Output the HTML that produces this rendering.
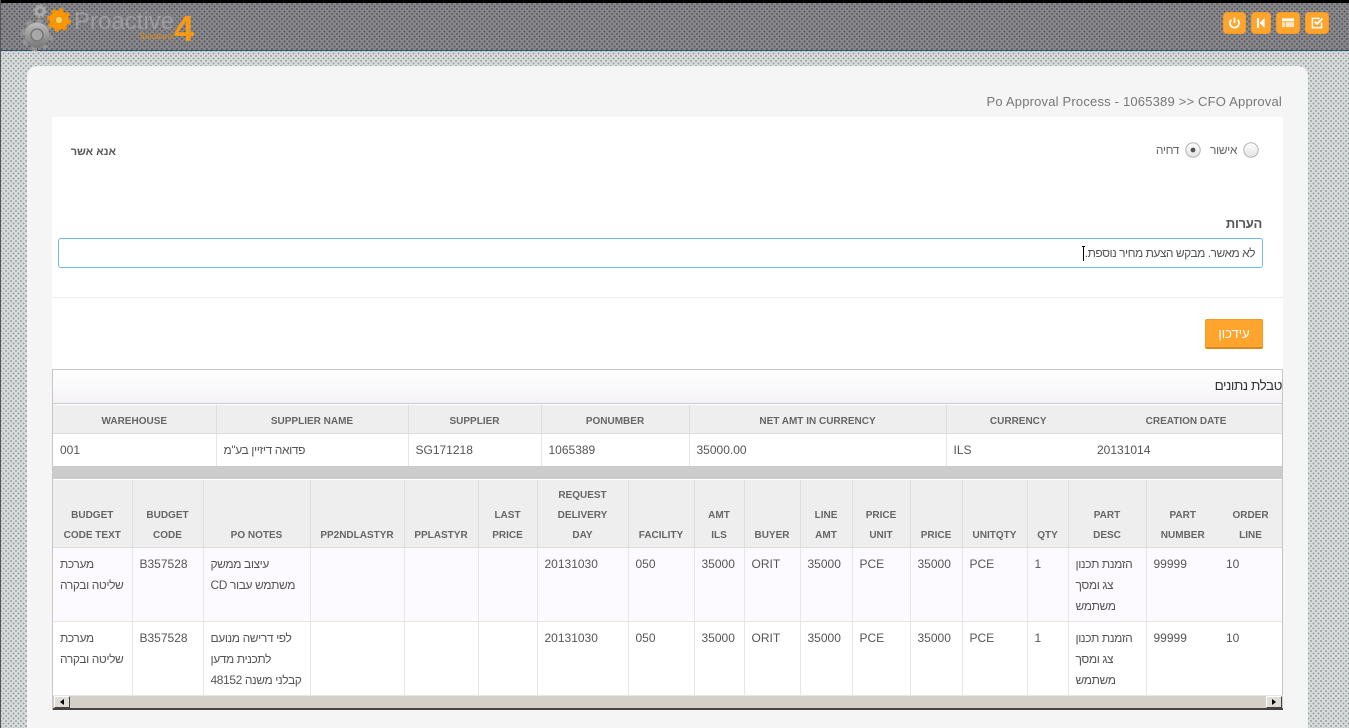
<!DOCTYPE html>
<html lang="he"><head><meta charset="utf-8"><title>Po Approval Process</title>
<style>
*{box-sizing:border-box}
html,body{margin:0;padding:0;width:1349px;height:728px;overflow:hidden}
body{position:relative;font-family:"Liberation Sans",Arial,sans-serif;color:#555;font-size:12px;
background-color:#d8dbdb;
background-image:radial-gradient(circle at 1px 1px,#9aa0a0 .8px,transparent 1px),radial-gradient(circle at 3.5px 3.5px,#9aa0a0 .8px,transparent 1px);background-size:5px 5px}
.abs{position:absolute}
#edge{left:0;top:0;width:1px;height:728px;background:#555}
#header{left:0;top:0;width:1349px;height:51px;border-top:3px solid #000;border-bottom:1px solid #2f5176;border-left:1px solid #444;
background-color:#88888c;
background-image:radial-gradient(circle at 1px 1px,#5a5a5e .8px,transparent 1px),radial-gradient(circle at 3.5px 3.5px,#5a5a5e .8px,transparent 1px);background-size:5px 5px}
.btn{top:12px;height:22px;background:#ffa42c;border:1px solid #f39a22;border-radius:4px}
.btn svg{position:absolute;left:0;top:0;width:100%;height:100%}
#card{left:27px;top:66px;width:1281px;height:680px;background:#f6f5f6;border-radius:10px}
#white{left:52px;top:117px;width:1231px;height:252px;background:#fff}
.t{white-space:nowrap}
#inp{left:58px;top:238px;width:1205px;height:30px;border:1px solid #6db9f2;border-radius:3px;background:#fff}
#panel{left:52px;top:369px;width:1231px;height:341px;border:1px solid #c9c4c8;border-bottom:none;background:#fff}
#ptitle{left:53px;top:370px;width:1229px;height:34px;background:linear-gradient(#fff,#f4f2f6);border-bottom:1px solid #ccc}
table{border-collapse:collapse;table-layout:fixed;position:absolute;left:53px;background:#fff}
th{background:#eee;color:#666;font-size:10px;font-weight:bold;line-height:20px;text-align:center;vertical-align:bottom;padding:0 0 1px;border-left:1px solid #ddd;border-bottom:1px solid #ddd}
td{color:#555;font-size:12px;line-height:21px;vertical-align:top;padding:6px 7px 0;border-left:1px solid #e6e6e6;border-bottom:1px solid #e6e6e6;overflow:hidden;white-space:nowrap}
.n{border-left:none}
.f{border-left:none}
tr.a td{background:#fdfaff}
.he{letter-spacing:-.4px}
#gray{left:53px;top:466px;width:1229px;height:13px;background:#ccc}
#sb{left:53px;top:695px;width:1230px;height:15px;background:#d4d0c8;border-top:1px solid #e8e6e0;border-bottom:2px solid #444}
.sbb{top:696px;width:16px;height:12px;background:#e0ddd6;border:1px solid #fff;border-right-color:#444;border-bottom-color:#444}
.tri{width:0;height:0;border-top:3.5px solid transparent;border-bottom:3.5px solid transparent;top:2px;left:5px}
</style></head><body>
<div id="header" class="abs"></div>
<div id="edge" class="abs"></div>

<svg class="abs" style="left:18px;top:3px" width="60" height="48" viewBox="0 0 60 48">
<defs><linearGradient id="g" x1="0" y1="0" x2="0" y2="1"><stop offset="0" stop-color="#bdbdbd"/><stop offset="1" stop-color="#777"/></linearGradient></defs>
<circle cx="19" cy="32" r="12.5" fill="url(#g)"/>
<circle cx="19" cy="32" r="14.5" fill="none" stroke="#949494" stroke-width="3.5" stroke-dasharray="5.5 5.9"/>
<circle cx="19" cy="32" r="6" fill="#a8a8a8" stroke="#777" stroke-width="1.5"/>
<circle cx="22" cy="8" r="4" fill="none" stroke="#a8a8a8" stroke-width="3"/>
<circle cx="22" cy="8" r="6" fill="none" stroke="#a2a2a2" stroke-width="2" stroke-dasharray="2.4 2.3"/>
<circle cx="41" cy="17" r="6.5" fill="none" stroke="#ff9600" stroke-width="6"/>
<circle cx="41" cy="17" r="10.5" fill="none" stroke="#f78f00" stroke-width="3" stroke-dasharray="4 4.25"/>
<circle cx="41" cy="17" r="3.2" fill="#ffd35a"/>
</svg>
<div class="abs t" style="left:74px;top:7px;font-size:24px;line-height:30px;color:#9c9ca0">Proactive</div>
<div class="abs t" style="left:139px;top:31px;font-size:8.5px;line-height:10px;color:#e08a10">Solutions</div>
<div class="abs t" style="left:174px;top:10px;font-size:36px;line-height:38px;font-weight:bold;color:#f59a12">4</div>

<div class="abs btn" style="left:1223px;width:23px"><svg viewBox="0 0 23 20"><path d="M8 6.5a5 5 0 1 0 7 0M11.5 4v6" fill="none" stroke="#fff" stroke-width="2"/></svg></div>
<div class="abs btn" style="left:1251px;width:20px"><svg viewBox="0 0 20 20"><path d="M5.5 4.5h2.4v11H5.5zM14 4.5v11L8.5 10z" fill="#fff"/></svg></div>
<div class="abs btn" style="left:1276px;width:24px"><svg viewBox="0 0 24 20"><path d="M5.5 5.5h13v9h-13z" fill="#ffe6c2"/><path d="M5.5 5h13v3h-13z" fill="#fff"/><path d="M5.5 8.6h13M9 8.6v6" stroke="#ffa42c" stroke-width=".9" fill="none"/></svg></div>
<div class="abs btn" style="left:1305px;width:24px"><svg viewBox="0 0 24 20"><path d="M17 9.5V15H7V5h8" fill="none" stroke="#fff" stroke-width="1.6"/><path d="M9.5 8.5l2.5 2.5 6-6" fill="none" stroke="#fff" stroke-width="2"/></svg></div>

<div id="card" class="abs"></div>
<div class="abs t" style="right:67px;top:94px;font-size:13px;line-height:15px;color:#777;letter-spacing:.19px">Po Approval Process - 1065389 &gt;&gt; CFO Approval</div>
<div id="white" class="abs"></div>

<div class="abs t" dir="rtl" style="left:72px;top:145px;width:44px;font-size:11px;line-height:14px;font-weight:bold;color:#555">אנא אשר</div>

<svg class="abs" style="left:1183px;top:140px" width="80" height="20" viewBox="0 0 80 20">
<defs><linearGradient id="r" x1="0" y1="0" x2="0" y2="1"><stop offset="0" stop-color="#fff"/><stop offset="1" stop-color="#e2e2e2"/></linearGradient></defs>
<circle cx="10" cy="10" r="7.2" fill="url(#r)" stroke="#b4b4b4"/><circle cx="10" cy="10" r="2.4" fill="#555"/>
<circle cx="68" cy="10" r="7.2" fill="url(#r)" stroke="#b4b4b4"/>
</svg>
<div class="abs t he" dir="rtl" style="left:1155px;top:143px;width:24px;font-size:12px;line-height:14px;color:#666">דחיה</div>
<div class="abs t he" dir="rtl" style="left:1207px;top:143px;width:30px;font-size:12px;line-height:14px;color:#666">אישור</div>

<div class="abs t" dir="rtl" style="left:1222px;top:216px;width:40px;font-size:13px;line-height:16px;font-weight:bold;color:#555;letter-spacing:-.3px">הערות</div>
<div id="inp" class="abs"></div>
<div class="abs t" dir="rtl" style="left:1060px;top:246px;width:195px;font-size:12px;line-height:14px;color:#555;letter-spacing:-.5px">לא מאשר. מבקש הצעת מחיר נוספת.</div>
<div class="abs" style="left:1083px;top:246px;width:1px;height:15px;background:#000"></div>
<div class="abs" style="left:1082px;top:246px;width:3px;height:1px;background:#000"></div>

<div class="abs" style="left:52px;top:297px;width:1231px;height:1px;background:#eee"></div>
<div class="abs t" dir="rtl" style="left:1205px;top:319px;width:58px;height:30px;background:#ffa42c;border:1px solid #f39a22;border-bottom:2px solid #d98a1e;border-radius:2px;color:#fff;font-size:13px;line-height:27px;text-align:center">עידכון</div>

<div id="panel" class="abs"></div>
<div id="ptitle" class="abs"></div>
<div class="abs t" dir="rtl" style="left:1180px;top:378px;width:102px;font-size:13.5px;line-height:16px;color:#333;letter-spacing:-.45px">טבלת נתונים</div>

<table style="top:405px;width:1229px">
<colgroup><col style="width:163px"><col style="width:192px"><col style="width:133px"><col style="width:148px"><col style="width:257px"><col style="width:144px"><col style="width:192px"></colgroup>
<tr style="height:28px"><th class="f">WAREHOUSE</th><th>SUPPLIER NAME</th><th>SUPPLIER</th><th>PONUMBER</th><th>NET AMT IN CURRENCY</th><th>CURRENCY</th><th class="n">CREATION DATE</th></tr>
<tr style="height:34px"><td class="f">001</td><td><span class="he">פדואה דיזיין בע"מ</span></td><td>SG171218</td><td>1065389</td><td>35000.00</td><td>ILS</td><td class="n">20131014</td></tr>
</table>
<div id="gray" class="abs"></div>

<table style="top:480px;width:1229px">
<colgroup><col style="width:79px"><col style="width:71px"><col style="width:107px"><col style="width:94px"><col style="width:74px"><col style="width:59px"><col style="width:91px"><col style="width:66px"><col style="width:50px"><col style="width:56px"><col style="width:52px"><col style="width:58px"><col style="width:52px"><col style="width:65px"><col style="width:41px"><col style="width:78px"><col style="width:73px"><col style="width:63px"></colgroup>
<tr style="height:67px">
<th class="f">BUDGET<br>CODE TEXT</th><th>BUDGET<br>CODE</th><th>PO NOTES</th><th>PP2NDLASTYR</th><th>PPLASTYR</th><th>LAST<br>PRICE</th><th>REQUEST<br>DELIVERY<br>DAY</th><th>FACILITY</th><th>AMT<br>ILS</th><th>BUYER</th><th>LINE<br>AMT</th><th>PRICE<br>UNIT</th><th>PRICE</th><th>UNITQTY</th><th>QTY</th><th>PART<br>DESC</th><th>PART<br>NUMBER</th><th class="n">ORDER<br>LINE</th>
</tr>
<tr class="a" style="height:74px">
<td class="f he"><div>מערכת</div><div>שליטה ובקרה</div></td><td>B357528</td><td class="he"><div>עיצוב ממשק</div><div>CD משתמש עבור</div></td><td></td><td></td><td></td><td>20131030</td><td>050</td><td>35000</td><td>ORIT</td><td>35000</td><td>PCE</td><td>35000</td><td>PCE</td><td>1</td><td class="he"><div>הזמנת תכנון</div><div>צג ומסך</div><div>משתמש</div></td><td>99999</td><td class="n">10</td>
</tr>
<tr style="height:74px">
<td class="f he"><div>מערכת</div><div>שליטה ובקרה</div></td><td>B357528</td><td class="he"><div>לפי דרישה מנועם</div><div>לתכנית מדען</div><div>48152 קבלני משנה</div></td><td></td><td></td><td></td><td>20131030</td><td>050</td><td>35000</td><td>ORIT</td><td>35000</td><td>PCE</td><td>35000</td><td>PCE</td><td>1</td><td class="he"><div>הזמנת תכנון</div><div>צג ומסך</div><div>משתמש</div></td><td>99999</td><td class="n">10</td>
</tr>
</table>

<div id="sb" class="abs"></div>
<div class="abs sbb" style="left:54px"><div class="abs tri" style="border-right:4px solid #000"></div></div>
<div class="abs sbb" style="left:1266px"><div class="abs tri" style="border-left:4px solid #000"></div></div>
</body></html>
